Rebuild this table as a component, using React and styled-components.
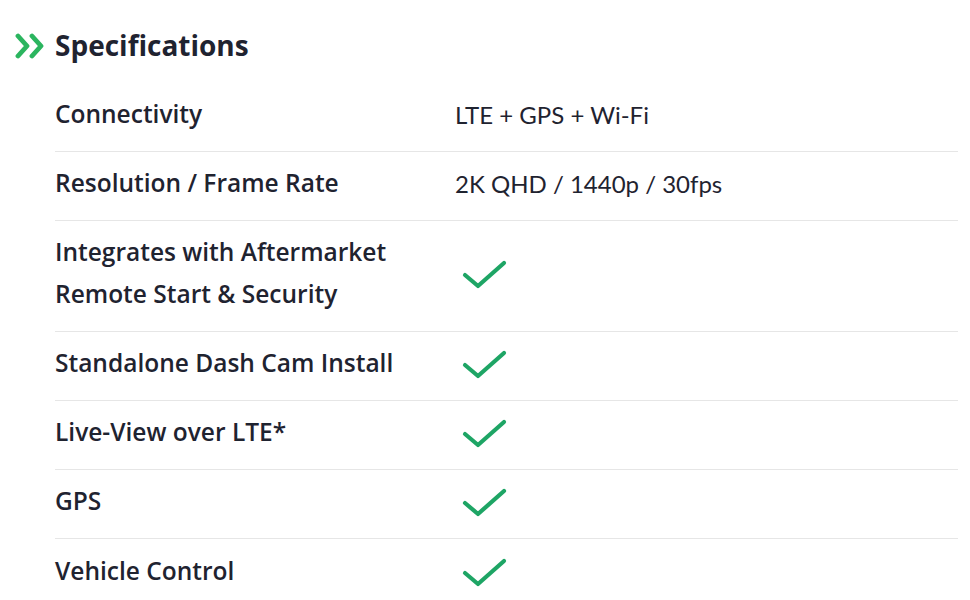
import React from "react";
import styled, { createGlobalStyle } from "styled-components";

const Global = createGlobalStyle`
  html, body { margin: 0; padding: 0; background: #fff; }
  body { font-family: Lato, "Liberation Sans", sans-serif; color: #1f2330; }
`;

const Page = styled.div`
  width: 970px;
  height: 600px;
  overflow: hidden;
  padding: 28px 12px 0 14px;
  box-sizing: border-box;
`;

const Header = styled.h2`
  display: flex;
  align-items: center;
  gap: 7px;
  margin: 0;
  font-family: "Open Sans", sans-serif;
  font-size: 28px;
  font-weight: 700;
  line-height: 34px;
  color: #1f2330;
`;

const Table = styled.div`
  margin-left: 41px;
  margin-top: 21px;
`;

const Row = styled.div`
  display: grid;
  grid-template-columns: 400px 1fr;
  align-items: center;
  min-height: 69px;
  padding: 10px 0 16px;
  box-sizing: border-box;
  border-bottom: ${(p) => (p.$last ? "none" : "1.5px solid #e6e6e6")};
`;

const Label = styled.div`
  font-family: "Open Sans", sans-serif;
  font-size: 24.5px;
  font-weight: 600;
  line-height: 42px;
  color: #1f2330;
`;

const Value = styled.div`
  font-size: 24px;
  font-weight: 400;
  color: #1f2330;
  display: flex;
  align-items: center;
`;

const Chevrons = () => (
  <svg width="34" height="26" viewBox="0 0 34 26" style={{ marginTop: 2 }}>
    <path d="M4 3 L13 13 L4 23" fill="none" stroke="#2bb55f" strokeWidth="4.8" strokeLinecap="round" strokeLinejoin="round" />
    <path d="M18 3 L27 13 L18 23" fill="none" stroke="#2bb55f" strokeWidth="4.8" strokeLinecap="round" strokeLinejoin="round" />
  </svg>
);

const Check = () => (
  <svg width="52" height="34" viewBox="0 0 52 34" style={{ marginLeft: 6, marginTop: 6 }}>
    <path d="M4 16 L17 27 L43 4" fill="none" stroke="#1ea565" strokeWidth="4.2" strokeLinecap="round" strokeLinejoin="round" />
  </svg>
);

const rows = [
  ["Connectivity", "LTE + GPS + Wi-Fi"],
  ["Resolution / Frame Rate", "2K QHD / 1440p / 30fps"],
  [<>Integrates with Aftermarket<br />Remote Start &amp; Security</>, null],
  ["Standalone Dash Cam Install", null],
  ["Live-View over LTE*", null],
  ["GPS", null],
  ["Vehicle Control", null],
];

export default function App() {
  return (
    <Page>
      <Global />
      <Header>
        <Chevrons />
        Specifications
      </Header>
      <Table>
        {rows.map(([l, v], i) => (
          <Row key={i} $last={i === rows.length - 1}>
            <Label>{l}</Label>
            <Value>{v ? v : <Check />}</Value>
          </Row>
        ))}
      </Table>
    </Page>
  );
}
